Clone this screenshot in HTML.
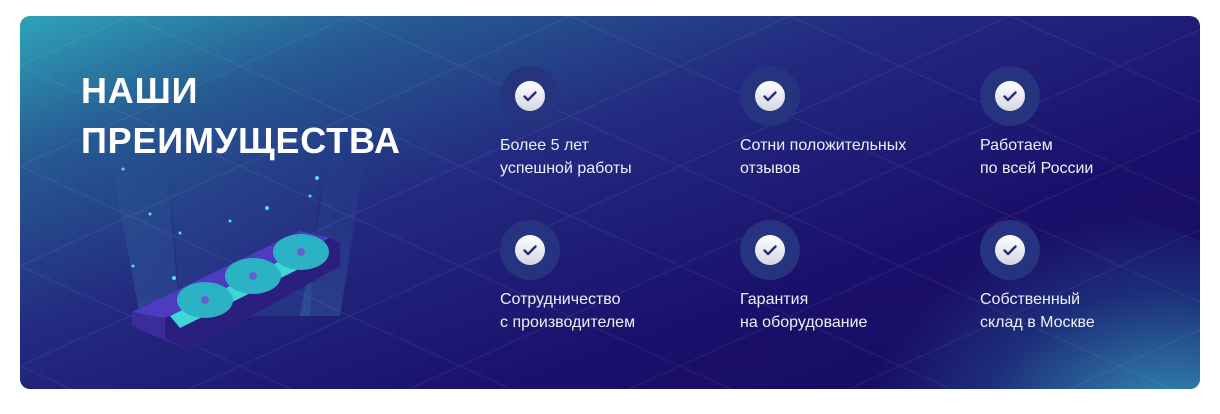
<!DOCTYPE html>
<html><head><meta charset="utf-8"><style>
html,body{margin:0;padding:0;background:#fff;width:1220px;height:414px;overflow:hidden;position:relative}
.card{position:absolute;left:20px;top:16px;width:1180px;height:373px;border-radius:10px;overflow:hidden;
background:linear-gradient(160deg,#2fa3b8 0%,#275a93 18%,#232a80 40%,#1a0f6a 70%,#170b62 100%)}
.glow{position:absolute;right:-80px;bottom:-120px;width:420px;height:300px;border-radius:50%;background:radial-gradient(ellipse at 75% 75%,rgba(60,180,200,.85),rgba(40,120,170,.3) 45%,rgba(20,20,110,0) 70%)}
h1{position:absolute;left:61px;top:50px;margin:0;font:bold 36px/50px "Liberation Sans",sans-serif;color:#fff;letter-spacing:0.8px}
.it{position:absolute;width:240px}
.ic{position:absolute;left:0;top:0;width:60px;height:60px;border-radius:50%;background:#26337e}
.ic b{position:absolute;left:15px;top:15px;width:30px;height:30px;border-radius:50%;background:linear-gradient(#fff,#d4d6e6)}
.ic svg{position:absolute;left:22px;top:22px}
.tx{position:absolute;left:0;top:68px;font:16px/23px "Liberation Sans",sans-serif;color:#eef0f8;white-space:nowrap}
</style></head><body>
<div class="card">
<div class="glow"></div>
<svg width="1180" height="373" style="position:absolute;left:0;top:0" fill="none">
<defs>
<linearGradient id="beam" x1="0" y1="0" x2="0" y2="1"><stop offset="0" stop-color="rgba(80,200,220,0)"/><stop offset="1" stop-color="rgba(80,200,220,0.18)"/></linearGradient>
<pattern id="grid" width="220" height="100" patternUnits="userSpaceOnUse"><path d="M0 50 L110 0 L220 50 L110 100 Z" stroke="rgba(255,255,255,0.07)" stroke-width="1"/></pattern>
</defs>
<rect width="1180" height="373" fill="url(#grid)"/>
<polygon points="90,140 145,140 160,300 120,300" fill="url(#beam)"/>
<polygon points="310,140 345,140 320,300 280,300" fill="url(#beam)"/>
<polygon points="150,140 300,140 290,300 160,300" fill="url(#beam)" opacity=".6"/>
<g stroke="none">
<polygon points="112,296 280,215 320,225 320,250 170,335 112,310" fill="#3a2d9a"/>
<polygon points="112,296 280,215 310,222 145,302" fill="#4d3cc0"/>
<polygon points="145,302 310,222 320,228 320,250 170,335 145,322" fill="#2a1f7e"/>
<polygon points="150,300 300,225 305,240 160,312" fill="#3fd6d8"/>
<ellipse cx="185" cy="284" rx="28" ry="18" fill="#2bb2c4"/>
<ellipse cx="233" cy="260" rx="28" ry="18" fill="#2bb2c4"/>
<ellipse cx="281" cy="236" rx="28" ry="18" fill="#2bb2c4"/>
<circle cx="185" cy="284" r="4" fill="#6a60d0"/><circle cx="233" cy="260" r="4" fill="#6a60d0"/><circle cx="281" cy="236" r="4" fill="#6a60d0"/>
</g>
<g fill="#4ee0e6" stroke="none">
<circle cx="103" cy="153" r="1.5"/><circle cx="130" cy="198" r="1.5"/><circle cx="160" cy="217" r="1.5"/><circle cx="247" cy="192" r="2"/><circle cx="290" cy="180" r="1.5"/><circle cx="297" cy="162" r="2"/><circle cx="154" cy="262" r="2"/><circle cx="113" cy="250" r="1.5"/><circle cx="210" cy="205" r="1.5"/>
</g>
</svg>
<h1>НАШИ<br>ПРЕИМУЩЕСТВА</h1>
</div>
<div class="it" style="left:500px;top:66px"><div class="ic"><b></b><svg width="16" height="16" viewBox="0 0 16 16"><path d="M2.5 8.5 L6 12 L13.5 4.5" stroke="#2a2d78" stroke-width="2.4" fill="none" stroke-linecap="round" stroke-linejoin="round"/></svg></div><div class="tx">Более 5 лет<br>успешной работы</div></div>
<div class="it" style="left:740px;top:66px"><div class="ic"><b></b><svg width="16" height="16" viewBox="0 0 16 16"><path d="M2.5 8.5 L6 12 L13.5 4.5" stroke="#2a2d78" stroke-width="2.4" fill="none" stroke-linecap="round" stroke-linejoin="round"/></svg></div><div class="tx">Сотни положительных<br>отзывов</div></div>
<div class="it" style="left:980px;top:66px"><div class="ic"><b></b><svg width="16" height="16" viewBox="0 0 16 16"><path d="M2.5 8.5 L6 12 L13.5 4.5" stroke="#2a2d78" stroke-width="2.4" fill="none" stroke-linecap="round" stroke-linejoin="round"/></svg></div><div class="tx">Работаем<br>по всей России</div></div>
<div class="it" style="left:500px;top:220px"><div class="ic"><b></b><svg width="16" height="16" viewBox="0 0 16 16"><path d="M2.5 8.5 L6 12 L13.5 4.5" stroke="#2a2d78" stroke-width="2.4" fill="none" stroke-linecap="round" stroke-linejoin="round"/></svg></div><div class="tx">Сотрудничество<br>с производителем</div></div>
<div class="it" style="left:740px;top:220px"><div class="ic"><b></b><svg width="16" height="16" viewBox="0 0 16 16"><path d="M2.5 8.5 L6 12 L13.5 4.5" stroke="#2a2d78" stroke-width="2.4" fill="none" stroke-linecap="round" stroke-linejoin="round"/></svg></div><div class="tx">Гарантия<br>на оборудование</div></div>
<div class="it" style="left:980px;top:220px"><div class="ic"><b></b><svg width="16" height="16" viewBox="0 0 16 16"><path d="M2.5 8.5 L6 12 L13.5 4.5" stroke="#2a2d78" stroke-width="2.4" fill="none" stroke-linecap="round" stroke-linejoin="round"/></svg></div><div class="tx">Собственный<br>склад в Москве</div></div>
</body></html>
